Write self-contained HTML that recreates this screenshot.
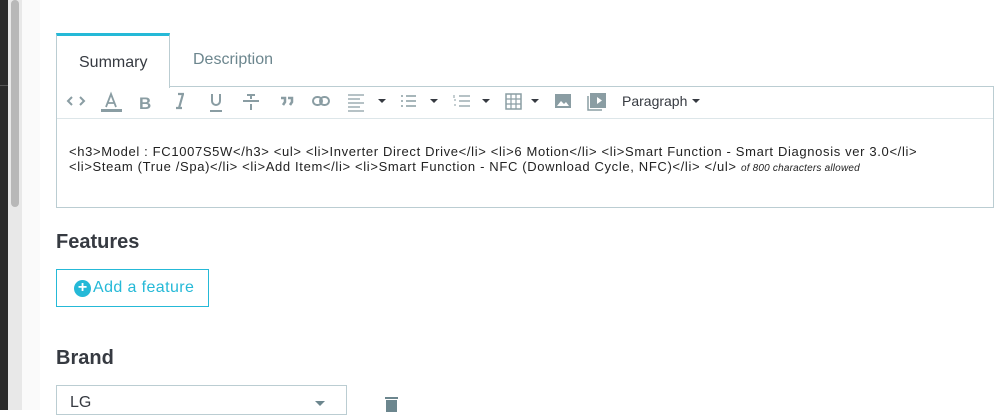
<!DOCTYPE html>
<html><head><style>
body{margin:0;width:1000px;height:410px;overflow:hidden;background:#fff;font-family:"Liberation Sans",sans-serif;position:relative;color:#363a41}
.a{position:absolute}
svg{position:absolute}
</style></head><body>
<div class="a" style="left:0;top:0;width:8px;height:410px;background:#2a2a2a"></div>
<div class="a" style="left:0;top:85px;width:8px;height:1px;background:#555"></div>
<div class="a" style="left:8px;top:0;width:14px;height:410px;background:#e8e8e8"></div>
<div class="a" style="left:11px;top:0;width:8px;height:207px;background:#b8b8b8;border-radius:4px"></div>
<div class="a" style="left:22px;top:0;width:18px;height:410px;background:#fafafa"></div>

<div class="a" style="left:56px;top:33px;width:114px;height:55px;border:1px solid #bbcdd2;border-top:3px solid #25b9d7;border-bottom:none;background:#fff;box-sizing:border-box"></div>
<div class="a" style="left:79px;top:54px;font-size:16px;color:#363a41">Summary</div>
<div class="a" style="left:193px;top:51px;font-size:16px;color:#6c868e">Description</div>
<div class="a" style="left:56px;top:86px;width:938px;height:122px;border:1px solid #bbcdd2;border-top:none;box-sizing:border-box"></div>
<div class="a" style="left:170px;top:86px;width:824px;height:1px;background:#bbcdd2"></div>
<div class="a" style="left:57px;top:118px;width:936px;height:1px;background:#dde6e9"></div>

<svg width="1000" height="120" style="left:0;top:0" fill="none" stroke="#8a9da3" stroke-width="2">
<path d="M72 97l-4 4 4 4M80 97l4 4-4 4"/>
<path d="M106 107l5-13 5 13M108 103h6" stroke-width="1.8"/><rect x="101" y="109" width="21" height="3" fill="#8a9da3" stroke="none"/>
<text x="139" y="109" font-size="17" font-weight="bold" fill="#8a9da3" stroke="none" font-family="Liberation Sans">B</text>
<path d="M178 94h6M176 108h6M183 94l-4 14" stroke-width="2.2"/>
<path d="M212 94v7a4 4 0 0 0 8 0v-7M210 111h12"/>
<path d="M243 101h16M247 95h8M251 95v4M251 104v6"/>
<path d="M281 98h4v4l-2 3M288 98h4v4l-2 3" stroke-width="2.5"/>
<rect x="313" y="97" width="9" height="8" rx="4"/><rect x="320" y="97" width="9" height="8" rx="4"/>
<path d="M348 95h16M348 99h12M348 103h16M348 107h12M348 111h16" stroke-width="1.3"/>
<path d="M401 96h2M406 96h10M401 101h2M406 101h10M401 106h2M406 106h10" stroke-width="1.5"/>
<path d="M459 96h11M459 101h11M459 106h11" stroke-width="1.3"/>
<path d="M454 95v3M454 100h2M454 105h2" stroke-width="1"/>
<rect x="506" y="94" width="15" height="15" stroke-width="1.5"/><path d="M511 94v15M516 94v15M506 99h15M506 104h15" stroke-width="1.2"/>
<rect x="555" y="94" width="16" height="14" fill="#8a9da3" stroke="none"/>
<path d="M557 106l4-5 3 3 2-2 3 4z" fill="#fff" stroke="none"/>
<rect x="590" y="93" width="16" height="15" fill="#8a9da3" stroke="none"/><path d="M597 97v7l5-3.5z" fill="#fff" stroke="none"/><path d="M588 96v14h14" stroke-width="1.5"/>
<g fill="#363a41" stroke="none"><path d="M378 99h8l-4 4z"/><path d="M430 99h8l-4 4z"/><path d="M482 99h8l-4 4z"/><path d="M531 99h8l-4 4z"/><path d="M692 99h8l-4 4z"/></g>
</svg>
<div class="a" style="left:622px;top:93px;font-size:14px;color:#363a41">Paragraph</div>

<div class="a" style="left:69px;top:144px;font-size:13px;letter-spacing:0.65px;line-height:15px;color:#222;white-space:nowrap">&lt;h3&gt;Model : FC1007S5W&lt;/h3&gt; &lt;ul&gt; &lt;li&gt;Inverter Direct Drive&lt;/li&gt; &lt;li&gt;6 Motion&lt;/li&gt; &lt;li&gt;Smart Function - Smart Diagnosis ver 3.0&lt;/li&gt;<br>&lt;li&gt;Steam (True /Spa)&lt;/li&gt; &lt;li&gt;Add Item&lt;/li&gt; &lt;li&gt;Smart Function - NFC (Download Cycle, NFC)&lt;/li&gt; &lt;/ul&gt; <i style="font-size:10px;letter-spacing:0.2px">of 800 characters allowed</i></div>

<div class="a" style="left:56px;top:231px;font-size:20px;font-weight:bold">Features</div>
<div class="a" style="left:56px;top:269px;width:153px;height:38px;border:1px solid #25b9d7;box-sizing:border-box"></div>
<div class="a" style="left:74px;top:280px;width:17px;height:17px;border-radius:50%;background:#25b9d7;color:#fff;font-size:16px;line-height:16px;text-align:center;font-weight:bold">+</div>
<div class="a" style="left:93px;top:279px;font-size:16px;letter-spacing:0.4px;color:#25b9d7">Add a feature</div>
<div class="a" style="left:56px;top:347px;font-size:20px;font-weight:bold">Brand</div>
<div class="a" style="left:56px;top:385px;width:291px;height:30px;border:1px solid #bbcdd2;box-sizing:border-box"></div>
<div class="a" style="left:70px;top:394px;font-size:16px">LG</div>
<svg width="12" height="6" style="left:315px;top:401px"><path d="M0 0h10l-5 5z" fill="#6c868e"/></svg>
<div class="a" style="left:385px;top:397px;width:13px;height:2px;background:#6c868e"></div>
<div class="a" style="left:386px;top:400px;width:11px;height:12px;background:#6c868e"></div>
</body></html>
